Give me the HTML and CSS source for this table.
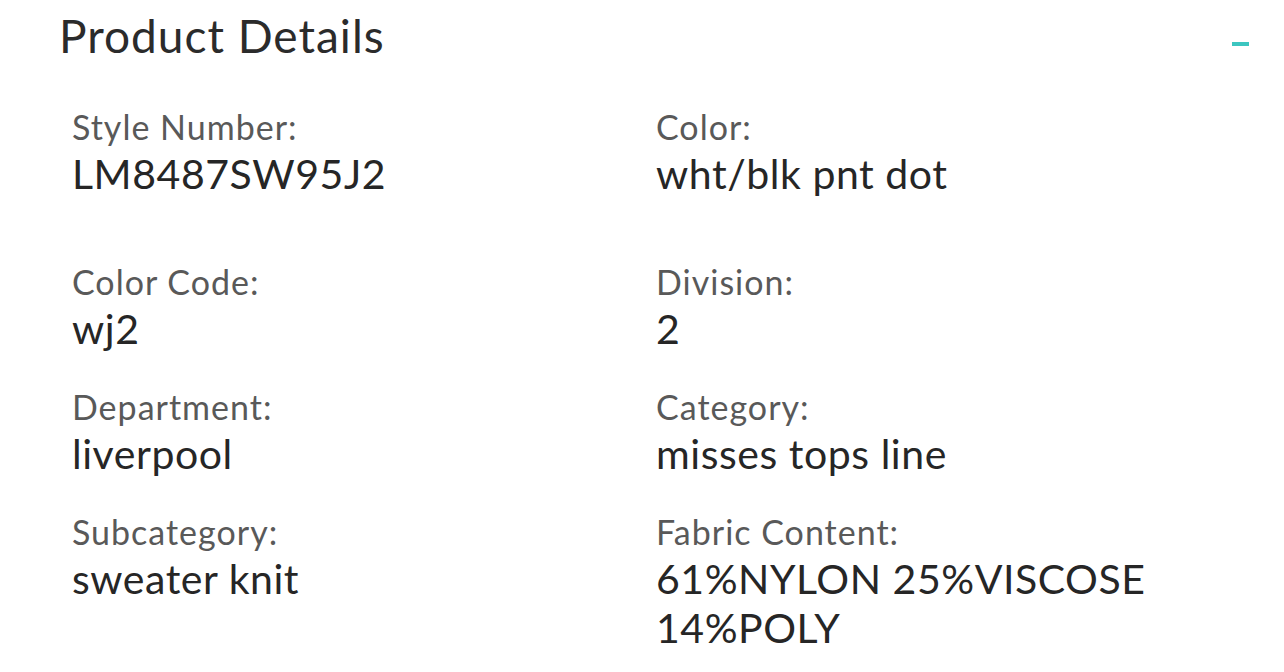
FILE: index.html
```html
<!DOCTYPE html>
<html lang="en">
<head>
<meta charset="utf-8">
<title>Product Details</title>
<link rel="stylesheet" href="styles.css">
</head>
<body>
<section class="panel">
  <header class="panel-head">
    <h2 class="panel-title">Product Details</h2>
    <span class="collapse" aria-label="Collapse"></span>
  </header>
  <div class="details">
    <div class="item item-first"><div class="label">Style Number:</div><div class="value">LM8487SW95J2</div></div>
    <div class="item item-first"><div class="label">Color:</div><div class="value">wht/blk pnt dot</div></div>
    <div class="item"><div class="label">Color Code:</div><div class="value">wj2</div></div>
    <div class="item"><div class="label">Division:</div><div class="value">2</div></div>
    <div class="item"><div class="label">Department:</div><div class="value">liverpool</div></div>
    <div class="item"><div class="label">Category:</div><div class="value">misses tops line</div></div>
    <div class="item"><div class="label">Subcategory:</div><div class="value">sweater knit</div></div>
    <div class="item"><div class="label">Fabric Content:</div><div class="value">61%NYLON 25%VISCOSE 14%POLY</div></div>
  </div>
</section>
</body>
</html>
```
FILE: styles.css
```css
html, body {
  margin: 0;
  padding: 0;
  background: #ffffff;
}
body {
  font-family: Lato, "Open Sans", sans-serif;
  color: #2a2a2a;
  width: 1284px;
  height: 672px;
  overflow: hidden;
}
.panel {
  padding: 8px 0 0 59px;
}
.panel-head {
  display: flex;
  align-items: flex-start;
  justify-content: space-between;
  padding-right: 35px;
}
.panel-title {
  margin: 0;
  font-size: 46px;
  line-height: 56px;
  font-weight: 400;
  letter-spacing: 1px;
  color: #2b2b2b;
}
.collapse {
  display: block;
  width: 17px;
  height: 4px;
  margin-top: 34px;
  background: #3cc6c0;
}
.details {
  display: grid;
  grid-template-columns: 584px 584px;
  padding-left: 13px;
  margin-top: 40px;
}
.item {
  margin-bottom: 31px;
}
.item-first {
  margin-bottom: 61px;
}
.label {
  font-size: 34px;
  line-height: 45px;
  letter-spacing: 1px;
  color: #595959;
}
.value {
  font-size: 41px;
  line-height: 49px;
  letter-spacing: 0.55px;
  color: #262626;
}
```
